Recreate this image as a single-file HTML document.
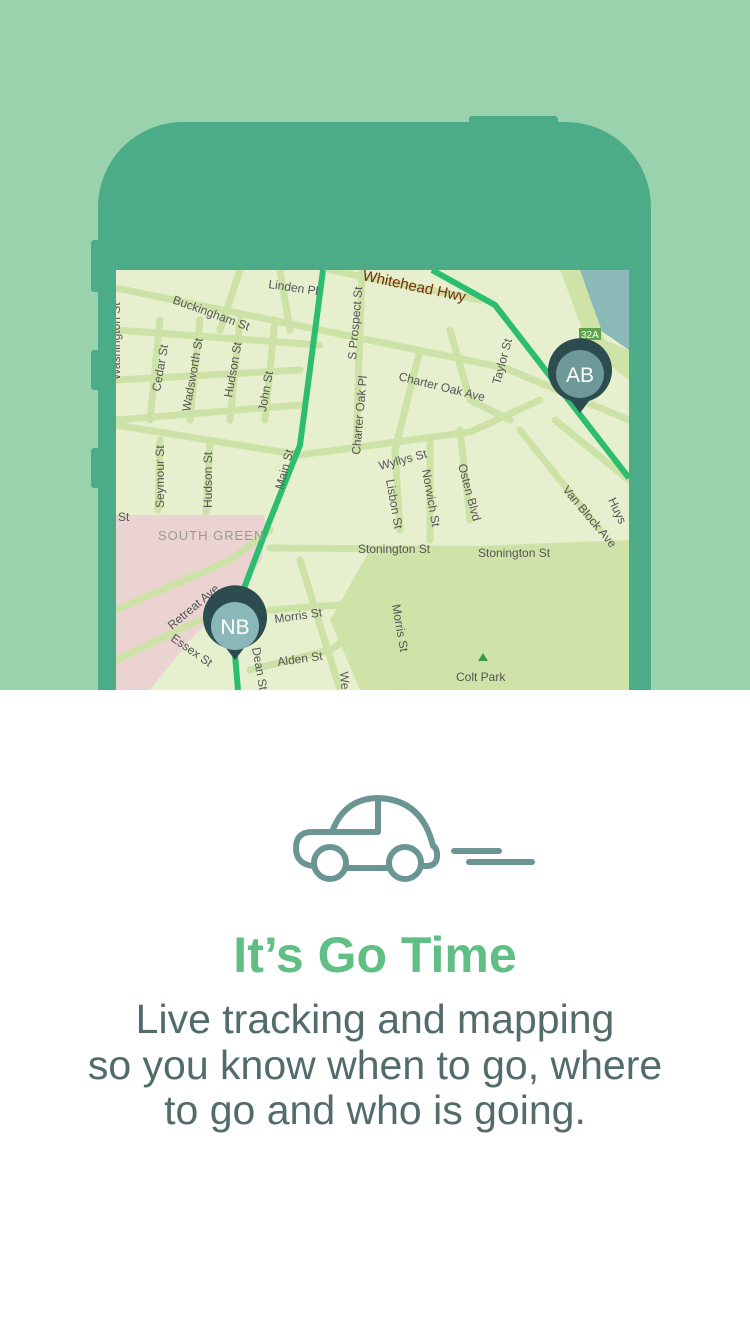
<!DOCTYPE html>
<html><head><meta charset="utf-8"><style>
html,body{margin:0;padding:0}
body{width:750px;height:1334px;position:relative;background:#fff;overflow:hidden;font-family:"Liberation Sans",sans-serif}
.top{position:absolute;left:0;top:0;width:750px;height:690px;background:#9bd2ae;overflow:hidden}
.phone{position:absolute;left:98px;top:122px;width:553px;height:700px;background:#4cac88;border-radius:85px 85px 0 0}
.btn{position:absolute;background:#4cac88}
h1{position:absolute;top:926px;left:0;width:750px;text-align:center;margin:0;font-size:50px;font-weight:bold;color:#5fbf84}
p{position:absolute;top:997px;left:0;width:750px;text-align:center;margin:0;font-size:41px;line-height:45.5px;color:#526c6c;font-weight:normal}
</style></head><body>
<div class="top">
<div class="btn" style="left:469px;top:116px;width:89px;height:10px;border-radius:3px"></div>
<div class="btn" style="left:91px;top:240px;width:10px;height:52px;border-radius:3px"></div>
<div class="btn" style="left:91px;top:350px;width:10px;height:40px;border-radius:3px"></div>
<div class="btn" style="left:91px;top:448px;width:10px;height:40px;border-radius:3px"></div>
<div class="phone"></div>
<svg style="position:absolute;left:116px;top:270px" width="513" height="420" viewBox="116 270 513 420">
<rect x="116" y="270" width="513" height="420" fill="#e6f0cf"/>
<polygon points="370,550 629,540 629,690 360,690 330,620" fill="#cfe3a9"/>
<polygon points="116,515 265,515 262,560 230,600 190,640 150,690 116,690" fill="#ebd3d2"/>
<polygon points="580,270 629,270 629,350 600,330" fill="#8ab9b8"/>
<polygon points="560,270 580,270 605,340 629,350 629,380 590,350" fill="#cfe3a9"/>
<g stroke="#cde2a6" stroke-width="7" fill="none" stroke-linecap="round">
<path d="M116,288 L505,368 L629,420"/>
<path d="M116,330 L320,345"/>
<path d="M160,320 L150,420 M200,320 L190,420 M240,320 L230,420 M275,320 L265,420"/>
<path d="M116,425 L300,455 L470,432 L540,400"/>
<path d="M160,440 L158,510 M210,445 L206,512"/>
<path d="M270,548 L560,550"/>
<path d="M362,270 L356,450"/>
<path d="M420,350 L395,450 L400,530 M430,440 L430,540 M460,430 L470,520"/>
<path d="M116,420 L300,405 M116,380 L300,370"/>
<path d="M116,610 L230,560 L270,530 M116,660 L200,620"/>
<path d="M300,560 L340,690 M392,560 L400,690"/>
<path d="M250,670 L330,650 L360,630 M270,610 L340,605"/>
<path d="M520,430 L600,530 M555,420 L629,480 M330,270 L480,300 M240,270 L220,330 M280,270 L290,330"/>
<path d="M450,330 L470,400 L510,420"/>
</g>
<g stroke="#2dbd6e" stroke-width="6" fill="none" stroke-linejoin="round">
<path d="M323,270 L300,445 L268,525 L232,620 L238,690"/>
<path d="M432,270 L495,305 L629,478"/>
</g>
<g font-family="Liberation Sans" font-size="12" fill="#555">
<text x="268" y="288" transform="rotate(8 268 288)">Linden Pl</text>
<text x="362" y="280" fill="#7a2a0a" font-size="15" transform="rotate(12 362 280)">Whitehead Hwy</text>
<text x="172" y="303" transform="rotate(20 172 303)">Buckingham St</text>
<text x="398" y="380" transform="rotate(14 398 380)">Charter Oak Ave</text>
<text x="160" y="392" transform="rotate(-80 160 392)">Cedar St</text>
<text x="190" y="412" transform="rotate(-80 190 412)">Wadsworth St</text>
<text x="232" y="398" transform="rotate(-80 232 398)">Hudson St</text>
<text x="266" y="412" transform="rotate(-80 266 412)">John St</text>
<text x="356" y="360" transform="rotate(-85 356 360)">S Prospect St</text>
<text x="360" y="455" transform="rotate(-85 360 455)">Charter Oak Pl</text>
<text x="500" y="385" transform="rotate(-75 500 385)">Taylor St</text>
<text x="380" y="470" transform="rotate(-15 380 470)">Wyllys St</text>
<text x="164" y="508" transform="rotate(-90 164 508)">Seymour St</text>
<text x="212" y="508" transform="rotate(-90 212 508)">Hudson St</text>
<text x="386" y="480" transform="rotate(80 386 480)">Lisbon St</text>
<text x="422" y="470" transform="rotate(80 422 470)">Norwich St</text>
<text x="458" y="465" transform="rotate(75 458 465)">Osten Blvd</text>
<text x="562" y="490" transform="rotate(50 562 490)">Van Block Ave</text>
<text x="608" y="500" transform="rotate(65 608 500)">Huys</text>
<text x="118" y="521">St</text>
<text x="158" y="540" fill="#999" font-size="13" letter-spacing="1">SOUTH GREEN</text>
<text x="358" y="553">Stonington St</text>
<text x="478" y="557">Stonington St</text>
<text x="172" y="630" transform="rotate(-40 172 630)">Retreat Ave</text>
<text x="170" y="640" transform="rotate(35 170 640)">Essex St</text>
<text x="275" y="623" transform="rotate(-8 275 623)">Morris St</text>
<text x="278" y="666" transform="rotate(-8 278 666)">Alden St</text>
<text x="252" y="648" transform="rotate(80 252 648)">Dean St</text>
<text x="392" y="605" transform="rotate(80 392 605)">Morris St</text>
<text x="340" y="672" transform="rotate(85 340 672)">We</text>
<text x="283" y="490" transform="rotate(-75 283 490)">Main St</text>
<text x="456" y="681">Colt Park</text>
<text x="120" y="380" transform="rotate(-90 120 380)">Washington St</text>
</g>
<rect x="579" y="328" width="22" height="12" fill="#5ea34a"/><text x="581" y="338" font-size="10" fill="#fff" font-family="Liberation Sans">32A</text>
<path d="M483,653 l-5,8 h10 z" fill="#3a9a4a"/>
<g>
<path d="M235,660 L226,648 A32,32 0 1 1 244,648 Z" fill="#2d4c4f"/>
<circle cx="235" cy="626" r="24" fill="#8ab7b7"/>
<text x="235" y="634" text-anchor="middle" font-size="21" fill="#fff" font-family="Liberation Sans">NB</text>
</g>
<g>
<path d="M580,413 L571,401 A32,32 0 1 1 589,401 Z" fill="#2d4c4f"/>
<circle cx="580" cy="374" r="24" fill="#6f9898"/>
<text x="580" y="382" text-anchor="middle" font-size="21" fill="#fff" font-family="Liberation Sans">AB</text>
</g>
</svg>
</div>
<svg style="position:absolute;left:0;top:0" width="750" height="1334">
<g stroke="#6a9593" stroke-width="6" fill="none" stroke-linecap="round" stroke-linejoin="round">
<path d="M332,832 H312 Q296,832 296,848 Q296,864 313,866"/>
<path d="M347,868 H389"/>
<path d="M421,866 H428 Q438,865 437,853 Q436,847 433,846 Q422,799 377,798 Q344,799 332,832"/>
<path d="M378,799 V832 H332"/>
<circle cx="330" cy="863" r="16"/>
<circle cx="405" cy="863" r="16"/>
<path d="M454,851 H499 M469,862 H532"/>
</g>
</svg>
<h1>It’s Go Time</h1>
<p>Live tracking and mapping<br>so you know when to go, where<br>to go and who is going.</p>
</body></html>
